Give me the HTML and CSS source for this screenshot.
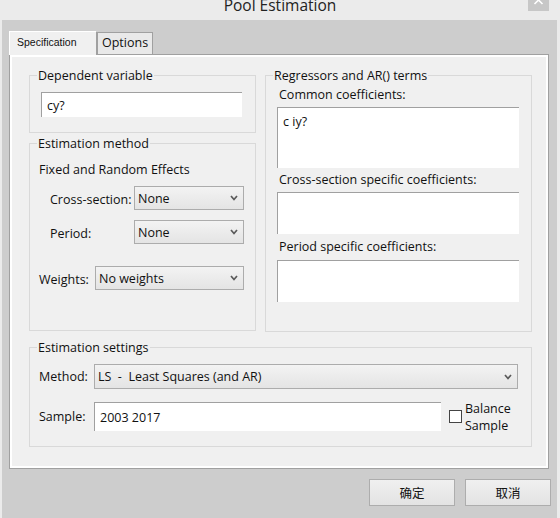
FILE: index.html
```html
<!DOCTYPE html>
<html lang="en">
  <head>
    <meta charset="UTF-8" />
    <title>Pool Estimation</title>
    <link rel="stylesheet" href="styles.css">
  </head>
  <body>
    <div class="titlebar">
      <span class="title">Pool Estimation</span>
      <span class="close-btn">
        <svg width="21" height="11" viewBox="0 0 21 11">
          <path d="M6.5 -4 L14.5 4 M14.5 -4 L6.5 4" stroke="#fff" stroke-width="1.6" fill="none" />
        </svg>
      </span>
    </div>

    <div class="window">
      <div class="tabs">
        <div class="tab tab-active">Specification</div>
        <div class="tab">Options</div>
      </div>

      <div class="panel">
        <div class="columns">
          <div class="left-col">
            <fieldset class="group dep-group">
              <legend>Dependent variable</legend>
              <div class="group-body">
                <input class="field dep-field" type="text" value="cy?">
              </div>
            </fieldset>

            <fieldset class="group method-group">
              <legend>Estimation method</legend>
              <div class="group-body">
                <div class="sub-title">Fixed and Random Effects</div>
                <div class="effect-row">
                  <span class="row-label">Cross-section:</span>
                  <div class="combo">
                    <span class="combo-text">None</span>
                    <svg class="chev" width="8" height="6" viewBox="0 0 8 6"><polyline points="1,1 4,4.5 7,1" /></svg>
                  </div>
                </div>
                <div class="effect-row period-row">
                  <span class="row-label">Period:</span>
                  <div class="combo">
                    <span class="combo-text">None</span>
                    <svg class="chev" width="8" height="6" viewBox="0 0 8 6"><polyline points="1,1 4,4.5 7,1" /></svg>
                  </div>
                </div>
                <div class="weights-row">
                  <span class="row-label">Weights:</span>
                  <div class="combo">
                    <span class="combo-text">No weights</span>
                    <svg class="chev" width="8" height="6" viewBox="0 0 8 6"><polyline points="1,1 4,4.5 7,1" /></svg>
                  </div>
                </div>
              </div>
            </fieldset>
          </div>

          <fieldset class="group regs-group">
            <legend>Regressors and AR() terms</legend>
            <div class="group-body">
              <div class="field-label">Common coefficients:</div>
              <textarea class="field common-area">c iy?</textarea>
              <div class="field-label">Cross-section specific coefficients:</div>
              <textarea class="field small-area"></textarea>
              <div class="field-label label-last">Period specific coefficients:</div>
              <textarea class="field small-area area-last"></textarea>
            </div>
          </fieldset>
        </div>

        <fieldset class="group settings-group">
          <legend>Estimation settings</legend>
          <div class="group-body">
            <div class="settings-row">
              <span class="settings-label">Method:</span>
              <div class="combo combo-wide">
                <span class="combo-text">LS  -  Least Squares (and AR)</span>
                <svg class="chev" width="8" height="6" viewBox="0 0 8 6"><polyline points="1,1 4,4.5 7,1" /></svg>
              </div>
            </div>
            <div class="settings-row sample-row">
              <span class="settings-label">Sample:</span>
              <input class="field sample-field" type="text" value="2003 2017">
              <span class="check-box"></span>
              <span class="check-text">Balance<br>Sample</span>
            </div>
          </div>
        </fieldset>
      </div>

      <div class="buttons">
        <button class="btn">确定</button>
        <button class="btn">取消</button>
      </div>
    </div>
  </body>
</html>
```

FILE: styles.css
```css
* {
  box-sizing: border-box;
}

body {
  margin: 0;
  width: 560px;
  height: 518px;
  overflow: hidden;
  background-color: #ebebeb;
  font-family: "Open Sans", "Noto Sans CJK SC", sans-serif;
  font-size: 12.5px;
  color: #111;
}

/* タイトルバー */
.titlebar {
  position: relative;
  height: 20px;
  overflow: hidden;
  text-align: center;
}

.title {
  display: block;
  margin-top: -3px;
  font-size: 15.5px;
  line-height: 16px;
  color: #222;
}

.close-btn {
  position: absolute;
  top: 0;
  right: 11px;
  width: 21px;
  height: 11px;
  background-color: #c7c7c7;
}

.close-btn svg {
  display: block;
}

.window {
  height: 498px;
  margin: 0 3px 0 2px;
  padding: 11px 8px 0 7px;
  background-color: #cdcdcd;
}

/* タブ */
.tabs {
  position: relative;
  z-index: 1;
  display: flex;
  align-items: flex-end;
  height: 23px;
}

.tab {
  height: 22px;
  padding: 0 4px;
  border: 1px solid #a0a0a0;
  border-bottom: none;
  background-color: #e9e9e9;
  line-height: 20px;
}

.tab-active {
  width: 88px;
  height: 24px;
  margin-bottom: -1px;
  padding-left: 7px;
  border-color: #fff #a0a0a0 #f0f0f0 #fff;
  background-color: #f0f0f0;
  font-family: "Liberation Sans", sans-serif;
  font-size: 10.5px;
  line-height: 21px;
}

.panel {
  height: 415px;
  padding: 11px 16px 0 19px;
  border: 1px solid #a0a0a0;
  box-shadow: inset 0 0 0 2px #fff;
  background-color: #f0f0f0;
}

.columns {
  display: grid;
  grid-template-columns: 227px 267px;
  column-gap: 9px;
  align-items: start;
}

/* グループボックス */
.group {
  min-width: 0;
  margin: 0;
  padding: 0;
  border: 1px solid #d9d9d9;
}

.group legend {
  margin-left: 7px;
  padding: 0 1px;
  line-height: 19px;
}

.dep-group .group-body {
  padding: 7px 13px 15px 11px;
}

.method-group {
  margin-top: 1px;
}

.method-group .group-body {
  padding: 8px 10px 40px 9px;
}

.sub-title {
  line-height: 18px;
}

.effect-row {
  display: flex;
  align-items: center;
  margin-top: 7px;
  margin-left: 11px;
}

.period-row {
  margin-top: 10px;
}

.effect-row .row-label {
  width: 84px;
  padding-top: 3px;
}

.effect-row .combo {
  width: 110px;
}

.weights-row {
  display: flex;
  align-items: center;
  margin-top: 22px;
}

.weights-row .row-label {
  width: 56px;
  padding-top: 3px;
}

.weights-row .combo {
  width: 149px;
}

/* コンボボックス */
.combo {
  display: flex;
  align-items: center;
  justify-content: space-between;
  height: 24px;
  padding: 0 5px 0 3px;
  border: 1px solid #acacac;
  background: linear-gradient(#f3f3f3, #e4e4e4);
}

.combo-text {
  white-space: pre;
}

.chev {
  display: block;
  fill: none;
  stroke: #5a5a5a;
  stroke-width: 1.7;
}

/* 入力欄 */
.field {
  display: block;
  padding: 0 5px;
  border: none;
  border-top: 1px solid #a0a0a0;
  border-left: 1px solid #a0a0a0;
  border-radius: 0;
  background-color: #fff;
  font: inherit;
  color: inherit;
  outline: none;
  resize: none;
}

.dep-field {
  width: 201px;
  height: 25px;
}

.regs-group .group-body {
  padding: 0 12px 29px 11px;
}

.field-label {
  margin: 2px 0 2px 2px;
  line-height: 20px;
}

.field-label:first-child {
  margin-top: 0;
}

.label-last {
  margin-top: 3px;
  margin-bottom: 3px;
}

textarea.field {
  width: 242px;
  padding: 5px 5px;
  line-height: 18px;
  overflow: hidden;
}

.common-area {
  height: 61px;
}

.small-area {
  height: 42px;
}

.settings-group {
  margin-top: 6px;
}

.settings-group .group-body {
  padding: 7px 13px 15px 9px;
}

.settings-row {
  display: flex;
  align-items: center;
}

.settings-label {
  width: 55px;
  flex-shrink: 0;
}

.combo-wide {
  flex: 1;
  height: 25px;
}

.sample-row {
  height: 29px;
  margin-top: 13px;
}

.sample-field {
  width: 347px;
  height: 29px;
}

.check-box {
  width: 13px;
  height: 13px;
  margin-left: 8px;
  border: 1px solid #444;
  background-color: #fff;
}

.check-text {
  margin: -4px 0 -4px 3px;
  line-height: 17px;
}

/* ボタン */
.buttons {
  display: flex;
  justify-content: flex-end;
  gap: 10px;
  margin-top: 10px;
  margin-right: -2px;
}

.btn {
  width: 86px;
  height: 27px;
  padding: 0;
  border: 1px solid #adadad;
  background: linear-gradient(#f0f0f0, #e3e3e3);
  font-family: "Noto Sans CJK SC", sans-serif;
  font-size: 12.5px;
  color: #111;
}
```
